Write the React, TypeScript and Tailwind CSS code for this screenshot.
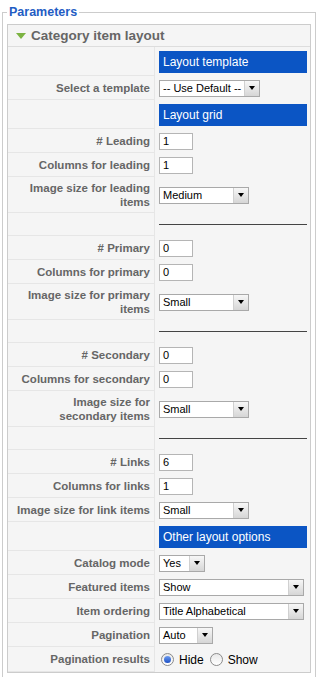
import React from "react";

type Row =
  | { kind: "head"; text: string }
  | { kind: "input"; label: string; value: string }
  | { kind: "select"; label: string[]; value: string; width: string }
  | { kind: "sep" }
  | { kind: "radio"; label: string };

const rows: Row[] = [
  { kind: "head", text: "Layout template" },
  { kind: "select", label: ["Select a template"], value: "-- Use Default --", width: "w-[101px]" },
  { kind: "head", text: "Layout grid" },
  { kind: "input", label: "# Leading", value: "1" },
  { kind: "input", label: "Columns for leading", value: "1" },
  { kind: "select", label: ["Image size for leading", "items"], value: "Medium", width: "w-[90px]" },
  { kind: "sep" },
  { kind: "input", label: "# Primary", value: "0" },
  { kind: "input", label: "Columns for primary", value: "0" },
  { kind: "select", label: ["Image size for primary", "items"], value: "Small", width: "w-[90px]" },
  { kind: "sep" },
  { kind: "input", label: "# Secondary", value: "0" },
  { kind: "input", label: "Columns for secondary", value: "0" },
  { kind: "select", label: ["Image size for", "secondary items"], value: "Small", width: "w-[90px]" },
  { kind: "sep" },
  { kind: "input", label: "# Links", value: "6" },
  { kind: "input", label: "Columns for links", value: "1" },
  { kind: "select", label: ["Image size for link items"], value: "Small", width: "w-[90px]" },
  { kind: "head", text: "Other layout options" },
  { kind: "select", label: ["Catalog mode"], value: "Yes", width: "w-[46px]" },
  { kind: "select", label: ["Featured items"], value: "Show", width: "w-[145px]" },
  { kind: "select", label: ["Item ordering"], value: "Title Alphabetical", width: "w-[145px]" },
  { kind: "select", label: ["Pagination"], value: "Auto", width: "w-[54px]" },
  { kind: "radio", label: "Pagination results" },
];

function Select({ value, width }: { value: string; width: string }) {
  return (
    <div className={`flex h-[17px] border border-[#a9a9a9] bg-white ${width}`}>
      <div className="flex-1 pl-[3px] text-[11px] leading-[15px] text-black whitespace-nowrap overflow-hidden">
        {value}
      </div>
      <div className="flex w-[15px] items-center justify-center border-l border-[#d0d0d0] bg-linear-to-b from-[#f7f7f7] to-[#d6d6d6]">
        <div className="h-0 w-0 border-x-[3px] border-t-[4px] border-x-transparent border-t-black" />
      </div>
    </div>
  );
}

function Radio({ checked }: { checked: boolean }) {
  return (
    <span className="flex h-[13px] w-[13px] items-center justify-center rounded-full border border-[#8a8a8a] bg-linear-to-b from-[#e8e8e8] to-white">
      {checked && (
        <span className="h-[7px] w-[7px] rounded-full bg-linear-to-b from-[#6d9bf0] to-[#1d4fc4]" />
      )}
    </span>
  );
}

function Label({ lines, h }: { lines: string[]; h: string }) {
  return (
    <div
      className={`flex items-center justify-end border-b border-r border-[#e6e6e6] pl-[4px] pr-[4px] text-right text-[11.5px] font-bold leading-[14px] text-[#666] whitespace-nowrap ${h}`}
    >
      <div>
        {lines.map((l, i) => (
          <div key={i}>{l}</div>
        ))}
      </div>
    </div>
  );
}

export default function App() {
  return (
    <div className="min-h-screen bg-white pt-[4px] font-['Liberation_Sans',Arial,sans-serif]">
      <fieldset className="ml-[2px] mr-[1px] border border-[#cccccc] px-[4px] pb-[4px] pt-[4px]">
        <legend className="px-[2px] text-[12.5px] font-bold leading-[16px] text-[#1f5dc4]">
          Parameters
        </legend>

        <div className="border border-[#cccccc] bg-[#f5f5f5]">
          {/* panel header */}
          <div className="flex h-[22px] items-center gap-[5px] border-b border-[#dddddd] pl-[8px]">
            <div className="h-0 w-0 border-x-[5px] border-t-[6px] border-x-transparent border-t-[#7cb342]" />
            <span className="text-[13.5px] font-bold leading-none text-[#666]">
              Category item layout
            </span>
          </div>

          <div className="grid grid-cols-[147px_1fr]">
            {rows.map((r, i) => {
              if (r.kind === "head") {
                return (
                  <React.Fragment key={i}>
                    <Label lines={[]} h="h-[29px]" />
                    <div className="pl-[4px] pr-[3px] pt-[4px]">
                      <div className="flex h-[22px] items-center bg-[#0b55c4] pl-[4px] text-[12px] text-white">
                        {r.text}
                      </div>
                    </div>
                  </React.Fragment>
                );
              }
              if (r.kind === "sep") {
                return (
                  <React.Fragment key={i}>
                    <Label lines={[]} h="h-[23px]" />
                    <div className="flex items-center pl-[4px] pr-[3px]">
                      <div className="w-full border-t border-[#444]" />
                    </div>
                  </React.Fragment>
                );
              }
              if (r.kind === "input") {
                return (
                  <React.Fragment key={i}>
                    <Label lines={[r.label]} h="h-[24px]" />
                    <div className="flex items-center pl-[4px]">
                      <div className="h-[17px] w-[34px] border border-[#b5b5b5] bg-white pl-[3px] text-[11px] leading-[15px] text-black">
                        {r.value}
                      </div>
                    </div>
                  </React.Fragment>
                );
              }
              if (r.kind === "select") {
                return (
                  <React.Fragment key={i}>
                    <Label lines={r.label} h={r.label.length > 1 ? "h-[36px]" : "h-[24px]"} />
                    <div className="flex items-center pl-[4px]">
                      <Select value={r.value} width={r.width} />
                    </div>
                  </React.Fragment>
                );
              }
              return (
                <React.Fragment key={i}>
                  <Label lines={[r.label]} h="h-[25px]" />
                  <div className="flex items-center pl-[6px] text-[12px] text-black">
                    <Radio checked />
                    <span className="ml-[5px]">Hide</span>
                    <span className="ml-[6px]">
                      <Radio checked={false} />
                    </span>
                    <span className="ml-[5px]">Show</span>
                  </div>
                </React.Fragment>
              );
            })}
          </div>
        </div>
      </fieldset>
    </div>
  );
}
